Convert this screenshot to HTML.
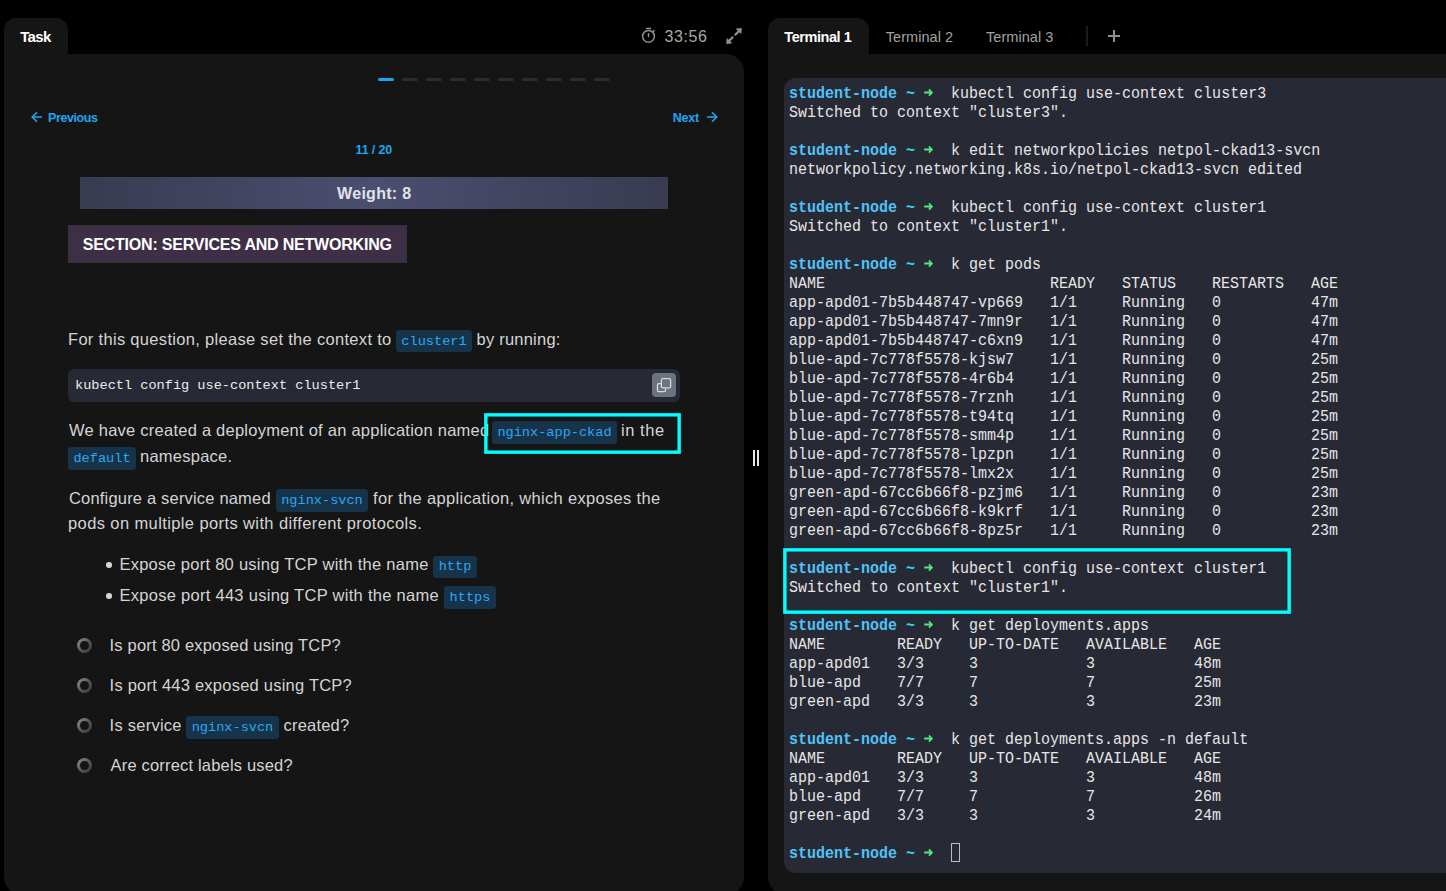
<!DOCTYPE html>
<html><head><meta charset="utf-8">
<style>
*{margin:0;padding:0;box-sizing:border-box}
html,body{width:1446px;height:891px;overflow:hidden;background:#000;font-family:"Liberation Sans",sans-serif}
.abs{position:absolute}
.tab{position:absolute;background:#151515;border-radius:12px 12px 0 0}
.panel{position:absolute;background:#151515}
.blue{color:#1ea6f0}
.t{position:absolute;white-space:pre;color:#d6d6d6;font-size:16px;line-height:20px}
.r{position:absolute;white-space:pre}
.pill{position:absolute;background:#17334a;border-radius:3px}
.pt{position:absolute;white-space:pre;font-family:"Liberation Mono",monospace;font-size:13.6px;line-height:17px;color:#2ba7f2;text-align:center}
.dash{position:absolute;top:78px;width:16px;height:3px;border-radius:2px;background:#2c2c2c}
.circ{position:absolute;left:77px;width:15px;height:15px;border-radius:50%;background:linear-gradient(135deg,#828282 15%,#5a5a5a 50%,#3c3c3c 90%)}
.circ:after{content:"";position:absolute;left:3px;top:3px;width:9px;height:9px;border-radius:50%;background:#151515}
#term{position:absolute;left:784px;top:78px;width:700px;height:795px;background:#272935;border-radius:12px}
#tt{position:absolute;left:0;top:0;font-family:"Liberation Mono",monospace;font-size:15px;color:#e6e6e6}
.tl{position:absolute;left:789px;height:17px;line-height:17px;white-space:pre;transform:scaleY(1.09);transform-origin:0 0}
.p{color:#4fc3f7;font-weight:bold}
.g{color:#3dd884}
.c{color:#3dd3df;font-weight:bold}
</style></head><body>
<!-- Left panel -->
<div class="tab" style="left:4px;top:18px;width:64px;height:40px"></div>
<div class="panel" style="left:4px;top:54px;width:740px;height:841px;border-radius:0 18px 18px 18px"></div>

<!-- timer -->
<svg class="abs" style="left:638px;top:24px" width="22" height="22" viewBox="0 0 22 22">
<circle cx="10.5" cy="12.3" r="5.9" fill="none" stroke="#8e8e93" stroke-width="1.5"/>
<line x1="8.4" y1="4.4" x2="12.6" y2="4.4" stroke="#8e8e93" stroke-width="1.5" stroke-linecap="round"/>
<line x1="10.5" y1="9.8" x2="10.5" y2="12.6" stroke="#8e8e93" stroke-width="1.5" stroke-linecap="round"/>
<line x1="14.9" y1="7.9" x2="16.0" y2="6.6" stroke="#8e8e93" stroke-width="1.5" stroke-linecap="round"/>
</svg>
<svg class="abs" style="left:722px;top:24px" width="24" height="24" viewBox="0 0 24 24">
<g fill="#8e8e93" stroke="#8e8e93" stroke-linejoin="round">
<line x1="13.4" y1="10.6" x2="17.3" y2="6.7" stroke-width="2.2" stroke-linecap="round"/>
<polygon points="19.4,4.5 18.9,9.4 14.4,4.9" stroke-width="0.8"/>
<line x1="10.6" y1="13.4" x2="6.7" y2="17.3" stroke-width="2.2" stroke-linecap="round"/>
<polygon points="4.6,19.5 5.1,14.6 9.6,19.1" stroke-width="0.8"/>
</g>
</svg>

<!-- progress dashes -->
<div class="dash" style="left:378px;background:#1ea6f0"></div>
<div class="dash" style="left:402px"></div>
<div class="dash" style="left:426px"></div>
<div class="dash" style="left:450px"></div>
<div class="dash" style="left:474px"></div>
<div class="dash" style="left:498px"></div>
<div class="dash" style="left:522px"></div>
<div class="dash" style="left:546px"></div>
<div class="dash" style="left:570px"></div>
<div class="dash" style="left:594px"></div>

<!-- nav -->
<svg class="abs" style="left:30.5px;top:111px" width="12" height="12" viewBox="0 0 12 12">
<path d="M11 6 H1.5 M6 1.2 L1.2 6 L6 10.8" fill="none" stroke="#1ea6f0" stroke-width="1.6"/>
</svg>
<svg class="abs" style="left:705.5px;top:111px" width="12" height="12" viewBox="0 0 12 12">
<path d="M1 6 H10.5 M6 1.2 L10.8 6 L6 10.8" fill="none" stroke="#1ea6f0" stroke-width="1.6"/>
</svg>

<!-- weight -->
<div class="abs" style="left:80px;top:177px;width:588px;height:32px;background:linear-gradient(90deg,#393b51,#4b4f6f 50%,#393b51)"></div>

<!-- section -->
<div class="abs" style="left:68px;top:225px;width:339px;height:38px;background:#3e2f46;border:1px solid #2f3437"></div>



<!-- splitter -->
<div class="abs" style="left:753px;top:450px;width:2px;height:16px;background:#e5e7eb"></div>
<div class="abs" style="left:757px;top:450px;width:2px;height:16px;background:#e5e7eb"></div>

<!-- Right panel -->
<div class="tab" style="left:768px;top:18px;width:101px;height:40px"></div>
<div class="panel" style="left:768px;top:54px;width:700px;height:841px;border-radius:0 18px 18px 18px"></div>
<div class="abs" style="left:1086px;top:26px;width:2px;height:20px;background:#1c1c1c"></div>
<div class="abs" style="left:1108px;top:35px;width:12px;height:2px;background:#8e8e95"></div>
<div class="abs" style="left:1113px;top:30px;width:2px;height:12px;background:#8e8e95"></div>

<div id="term"></div>
<div id="tt"><div class="tl" style="top:85px"><span class="p">student-node</span> <span class="c">~</span> <span class="g"><svg width="9" height="17" viewBox="0 0 9 17" style="vertical-align:top"><path d="M0.2 6.9 H7.8 M4.9 4.0 L7.9 6.9 L4.9 9.8" fill="none" stroke="#4deb7d" stroke-width="1.7"/></svg></span>  kubectl config use-context cluster3</div><div class="tl" style="top:104px">Switched to context &quot;cluster3&quot;.</div><div class="tl" style="top:123px"></div><div class="tl" style="top:142px"><span class="p">student-node</span> <span class="c">~</span> <span class="g"><svg width="9" height="17" viewBox="0 0 9 17" style="vertical-align:top"><path d="M0.2 6.9 H7.8 M4.9 4.0 L7.9 6.9 L4.9 9.8" fill="none" stroke="#4deb7d" stroke-width="1.7"/></svg></span>  k edit networkpolicies netpol-ckad13-svcn</div><div class="tl" style="top:161px">networkpolicy.networking.k8s.io/netpol-ckad13-svcn edited</div><div class="tl" style="top:180px"></div><div class="tl" style="top:199px"><span class="p">student-node</span> <span class="c">~</span> <span class="g"><svg width="9" height="17" viewBox="0 0 9 17" style="vertical-align:top"><path d="M0.2 6.9 H7.8 M4.9 4.0 L7.9 6.9 L4.9 9.8" fill="none" stroke="#4deb7d" stroke-width="1.7"/></svg></span>  kubectl config use-context cluster1</div><div class="tl" style="top:218px">Switched to context &quot;cluster1&quot;.</div><div class="tl" style="top:237px"></div><div class="tl" style="top:256px"><span class="p">student-node</span> <span class="c">~</span> <span class="g"><svg width="9" height="17" viewBox="0 0 9 17" style="vertical-align:top"><path d="M0.2 6.9 H7.8 M4.9 4.0 L7.9 6.9 L4.9 9.8" fill="none" stroke="#4deb7d" stroke-width="1.7"/></svg></span>  k get pods</div><div class="tl" style="top:275px">NAME                         READY   STATUS    RESTARTS   AGE</div><div class="tl" style="top:294px">app-apd01-7b5b448747-vp669   1/1     Running   0          47m</div><div class="tl" style="top:313px">app-apd01-7b5b448747-7mn9r   1/1     Running   0          47m</div><div class="tl" style="top:332px">app-apd01-7b5b448747-c6xn9   1/1     Running   0          47m</div><div class="tl" style="top:351px">blue-apd-7c778f5578-kjsw7    1/1     Running   0          25m</div><div class="tl" style="top:370px">blue-apd-7c778f5578-4r6b4    1/1     Running   0          25m</div><div class="tl" style="top:389px">blue-apd-7c778f5578-7rznh    1/1     Running   0          25m</div><div class="tl" style="top:408px">blue-apd-7c778f5578-t94tq    1/1     Running   0          25m</div><div class="tl" style="top:427px">blue-apd-7c778f5578-smm4p    1/1     Running   0          25m</div><div class="tl" style="top:446px">blue-apd-7c778f5578-lpzpn    1/1     Running   0          25m</div><div class="tl" style="top:465px">blue-apd-7c778f5578-lmx2x    1/1     Running   0          25m</div><div class="tl" style="top:484px">green-apd-67cc6b66f8-pzjm6   1/1     Running   0          23m</div><div class="tl" style="top:503px">green-apd-67cc6b66f8-k9krf   1/1     Running   0          23m</div><div class="tl" style="top:522px">green-apd-67cc6b66f8-8pz5r   1/1     Running   0          23m</div><div class="tl" style="top:541px"></div><div class="tl" style="top:560px"><span class="p">student-node</span> <span class="c">~</span> <span class="g"><svg width="9" height="17" viewBox="0 0 9 17" style="vertical-align:top"><path d="M0.2 6.9 H7.8 M4.9 4.0 L7.9 6.9 L4.9 9.8" fill="none" stroke="#4deb7d" stroke-width="1.7"/></svg></span>  kubectl config use-context cluster1</div><div class="tl" style="top:579px">Switched to context &quot;cluster1&quot;.</div><div class="tl" style="top:598px"></div><div class="tl" style="top:617px"><span class="p">student-node</span> <span class="c">~</span> <span class="g"><svg width="9" height="17" viewBox="0 0 9 17" style="vertical-align:top"><path d="M0.2 6.9 H7.8 M4.9 4.0 L7.9 6.9 L4.9 9.8" fill="none" stroke="#4deb7d" stroke-width="1.7"/></svg></span>  k get deployments.apps</div><div class="tl" style="top:636px">NAME        READY   UP-TO-DATE   AVAILABLE   AGE</div><div class="tl" style="top:655px">app-apd01   3/3     3            3           48m</div><div class="tl" style="top:674px">blue-apd    7/7     7            7           25m</div><div class="tl" style="top:693px">green-apd   3/3     3            3           23m</div><div class="tl" style="top:712px"></div><div class="tl" style="top:731px"><span class="p">student-node</span> <span class="c">~</span> <span class="g"><svg width="9" height="17" viewBox="0 0 9 17" style="vertical-align:top"><path d="M0.2 6.9 H7.8 M4.9 4.0 L7.9 6.9 L4.9 9.8" fill="none" stroke="#4deb7d" stroke-width="1.7"/></svg></span>  k get deployments.apps -n default</div><div class="tl" style="top:750px">NAME        READY   UP-TO-DATE   AVAILABLE   AGE</div><div class="tl" style="top:769px">app-apd01   3/3     3            3           48m</div><div class="tl" style="top:788px">blue-apd    7/7     7            7           26m</div><div class="tl" style="top:807px">green-apd   3/3     3            3           24m</div><div class="tl" style="top:826px"></div><div class="tl" style="top:845px"><span class="p">student-node</span> <span class="c">~</span> <span class="g"><svg width="9" height="17" viewBox="0 0 9 17" style="vertical-align:top"><path d="M0.2 6.9 H7.8 M4.9 4.0 L7.9 6.9 L4.9 9.8" fill="none" stroke="#4deb7d" stroke-width="1.7"/></svg></span>  </div></div><!--/tt-->
<!-- code block -->
<div class="abs" style="left:68px;top:369px;width:612px;height:33px;background:#272935;border-radius:6px"></div>
<div class="abs" style="left:75px;top:377.4px;font-family:'Liberation Mono',monospace;font-size:13.6px;line-height:17px;color:#ececec;white-space:pre">kubectl config use-context cluster1</div>
<div class="abs" style="left:652px;top:373px;width:24px;height:24px;background:#6c727f;border-radius:4px"></div>
<svg class="abs" style="left:652px;top:373px" width="24" height="24" viewBox="0 0 24 24">
<rect x="9.4" y="5.6" width="9.2" height="9.2" rx="1.3" fill="none" stroke="#d8d8d8" stroke-width="1.3"/>
<path d="M9.1 10.6 H6.6 a1.1 1.1 0 0 0 -1.1 1.1 V17.6 a1.1 1.1 0 0 0 1.1 1.1 H12.4 a1.1 1.1 0 0 0 1.1 -1.1 V15.2" fill="none" stroke="#d8d8d8" stroke-width="1.3"/>
</svg>
<!-- bullets -->
<div class="abs" style="left:106.4px;top:562.2px;width:5.6px;height:5.6px;border-radius:50%;background:#d4d4d4"></div>
<div class="abs" style="left:106.4px;top:593.2px;width:5.6px;height:5.6px;border-radius:50%;background:#d4d4d4"></div>
<!-- circles -->
<div class="circ" style="top:638px"></div>
<div class="circ" style="top:678px"></div>
<div class="circ" style="top:718px"></div>
<div class="circ" style="top:758px"></div>
<div id="content"><div class="r" style="left:68.00px;top:328.97px;font-size:16.5px;line-height:20.62px;letter-spacing:0.308px;color:#d4d4d4;font-weight:400">For this question, please set the context to</div>
<div class="r" style="left:476.50px;top:328.97px;font-size:16.5px;line-height:20.62px;letter-spacing:0.225px;color:#d4d4d4;font-weight:400">by running:</div>
<div class="r" style="left:69.00px;top:419.97px;font-size:16.5px;line-height:20.62px;letter-spacing:0.241px;color:#d4d4d4;font-weight:400">We have created a deployment of an application named</div>
<div class="r" style="left:621.00px;top:419.97px;font-size:16.5px;line-height:20.62px;letter-spacing:0.563px;color:#d4d4d4;font-weight:400">in the</div>
<div class="r" style="left:140.00px;top:445.97px;font-size:16.5px;line-height:20.62px;letter-spacing:0.244px;color:#d4d4d4;font-weight:400">namespace.</div>
<div class="r" style="left:69.00px;top:487.97px;font-size:16.5px;line-height:20.62px;letter-spacing:0.183px;color:#d4d4d4;font-weight:400">Configure a service named</div>
<div class="r" style="left:373.00px;top:487.97px;font-size:16.5px;line-height:20.62px;letter-spacing:0.325px;color:#d4d4d4;font-weight:400">for the application, which exposes the</div>
<div class="r" style="left:68.00px;top:513.47px;font-size:16.5px;line-height:20.62px;letter-spacing:0.392px;color:#d4d4d4;font-weight:400">pods on multiple ports with different protocols.</div>
<div class="r" style="left:119.40px;top:553.97px;font-size:16.5px;line-height:20.62px;letter-spacing:0.261px;color:#d4d4d4;font-weight:400">Expose port 80 using TCP with the name</div>
<div class="r" style="left:119.40px;top:584.97px;font-size:16.5px;line-height:20.62px;letter-spacing:0.284px;color:#d4d4d4;font-weight:400">Expose port 443 using TCP with the name</div>
<div class="r" style="left:109.60px;top:634.97px;font-size:16.5px;line-height:20.62px;letter-spacing:0.176px;color:#d4d4d4;font-weight:400">Is port 80 exposed using TCP?</div>
<div class="r" style="left:109.60px;top:674.97px;font-size:16.5px;line-height:20.62px;letter-spacing:0.233px;color:#d4d4d4;font-weight:400">Is port 443 exposed using TCP?</div>
<div class="r" style="left:109.60px;top:714.97px;font-size:16.5px;line-height:20.62px;letter-spacing:0.244px;color:#d4d4d4;font-weight:400">Is service</div>
<div class="r" style="left:283.50px;top:714.97px;font-size:16.5px;line-height:20.62px;letter-spacing:0.209px;color:#d4d4d4;font-weight:400">created?</div>
<div class="r" style="left:110.60px;top:754.97px;font-size:16.5px;line-height:20.62px;letter-spacing:0.176px;color:#d4d4d4;font-weight:400">Are correct labels used?</div>
<div class="r" style="left:20.20px;top:28.43px;font-size:15px;line-height:18.75px;letter-spacing:-0.645px;color:#ffffff;font-weight:700">Task</div>
<div class="r" style="left:664.50px;top:26.66px;font-size:16px;line-height:20.0px;letter-spacing:0.590px;color:#a8a8a8;font-weight:400">33:56</div>
<div class="r" style="left:48.00px;top:110.96px;font-size:12.5px;line-height:15.62px;letter-spacing:-0.393px;color:#1ea6f0;font-weight:700">Previous</div>
<div class="r" style="left:672.80px;top:110.86px;font-size:12.5px;line-height:15.62px;letter-spacing:-0.244px;color:#1ea6f0;font-weight:700">Next</div>
<div class="r" style="left:355.60px;top:142.76px;font-size:12.5px;line-height:15.62px;letter-spacing:-0.164px;color:#1ea6f0;font-weight:700">11 / 20</div>
<div class="r" style="left:337.10px;top:184.26px;font-size:16px;line-height:20.0px;letter-spacing:0.287px;color:#e2e2ea;font-weight:700">Weight: 8</div>
<div class="r" style="left:82.70px;top:235.36px;font-size:16px;line-height:20.0px;letter-spacing:-0.204px;color:#ffffff;font-weight:700">SECTION: SERVICES AND NETWORKING</div>
<div class="r" style="left:784.30px;top:27.92px;font-size:14.5px;line-height:18.12px;letter-spacing:-0.432px;color:#ffffff;font-weight:700">Terminal 1</div>
<div class="r" style="left:885.80px;top:27.92px;font-size:14.5px;line-height:18.12px;letter-spacing:0.042px;color:#a3a3a3;font-weight:400">Terminal 2</div>
<div class="r" style="left:986.00px;top:27.92px;font-size:14.5px;line-height:18.12px;letter-spacing:0.053px;color:#a3a3a3;font-weight:400">Terminal 3</div>
<div class="pill" style="left:396px;top:330px;width:76px;height:22px"></div>
<div class="pt" style="left:396px;width:76px;top:333.18px">cluster1</div>
<div class="pill" style="left:492px;top:421px;width:125px;height:23px"></div>
<div class="pt" style="left:492px;width:125px;top:424.08px">nginx-app-ckad</div>
<div class="pill" style="left:68px;top:447px;width:68px;height:23px"></div>
<div class="pt" style="left:68px;width:68px;top:449.98px">default</div>
<div class="pill" style="left:276px;top:489px;width:92px;height:23px"></div>
<div class="pt" style="left:276px;width:92px;top:491.88px">nginx-svcn</div>
<div class="pill" style="left:433px;top:556px;width:44px;height:22px"></div>
<div class="pt" style="left:433px;width:44px;top:557.88px">http</div>
<div class="pill" style="left:444px;top:586px;width:52px;height:23px"></div>
<div class="pt" style="left:444px;width:52px;top:588.88px">https</div>
<div class="pill" style="left:186px;top:716px;width:93px;height:23px"></div>
<div class="pt" style="left:186px;width:93px;top:718.88px">nginx-svcn</div></div><!--/content-->
<!-- cursor -->
<div class="abs" style="left:951px;top:843px;width:9px;height:19px;border:1px solid #bdbdbd"></div>
<!-- annotation boxes -->
<svg class="abs" style="left:482px;top:411px" width="201" height="45"><rect x="3.85" y="3.85" width="193.30" height="37.30" fill="none" stroke="#00ffff" stroke-width="3.4"/></svg>
<svg class="abs" style="left:781px;top:546px" width="512" height="70"><rect x="3.85" y="3.85" width="504.30" height="62.30" fill="none" stroke="#00ffff" stroke-width="3.4"/></svg>
</body></html>
